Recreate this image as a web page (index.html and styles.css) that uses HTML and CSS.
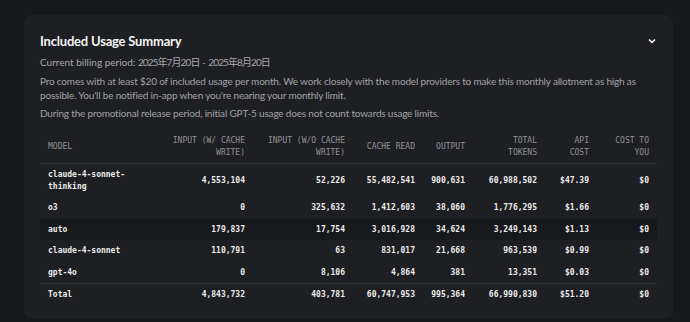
FILE: index.html
```html
<!DOCTYPE html>
<html lang="en">
<head>
  <meta charset="UTF-8" />
  <title>Included Usage Summary</title>
  <link rel="stylesheet" href="styles.css">
</head>
<body>
  <section class="card">
    <header class="card-head">
      <h1>Included Usage Summary</h1>
      <svg class="chevron" width="8" height="6" viewBox="0 0 8 6"><path d="M1 1.5 L4 4.5 L7 1.5" fill="none" stroke="#fff" stroke-width="1.5"/></svg>
    </header>
    <p class="period">Current billing period: <span class="date">2025年7月20日</span> - <span class="date">2025年8月20日</span></p>
    <p class="note">Pro comes with at least $20 of included usage per month. We work closely with the model providers to make this monthly allotment as high as possible. You'll be notified in-app when you're nearing your monthly limit.</p>
    <p class="note">During the promotional release period, initial GPT-5 usage does not count towards usage limits.</p>

    <table class="usage">
      <colgroup>
        <col class="w-model">
        <col class="w-in">
        <col class="w-in2">
        <col class="w-read">
        <col class="w-out">
        <col class="w-total">
        <col class="w-api">
        <col class="w-you">
      </colgroup>
      <thead>
        <tr>
          <th class="model">Model</th>
          <th>Input (w/ Cache Write)</th>
          <th>Input (w/o Cache Write)</th>
          <th>Cache Read</th>
          <th>Output</th>
          <th>Total Tokens</th>
          <th>API Cost</th>
          <th>Cost to You</th>
        </tr>
      </thead>
      <tbody>
        <tr>
          <td class="model">claude-4-sonnet-thinking</td>
          <td>4,553,104</td><td>52,226</td><td>55,482,541</td><td>900,631</td><td>60,988,502</td><td>$47.39</td><td>$0</td>
        </tr>
        <tr>
          <td class="model">o3</td>
          <td>0</td><td>325,632</td><td>1,412,603</td><td>38,060</td><td>1,776,295</td><td>$1.66</td><td>$0</td>
        </tr>
        <tr class="hover">
          <td class="model">auto</td>
          <td>179,837</td><td>17,754</td><td>3,016,928</td><td>34,624</td><td>3,249,143</td><td>$1.13</td><td>$0</td>
        </tr>
        <tr>
          <td class="model">claude-4-sonnet</td>
          <td>110,791</td><td>63</td><td>831,017</td><td>21,668</td><td>963,539</td><td>$0.99</td><td>$0</td>
        </tr>
        <tr>
          <td class="model">gpt-4o</td>
          <td>0</td><td>8,106</td><td>4,864</td><td>381</td><td>13,351</td><td>$0.03</td><td>$0</td>
        </tr>
      </tbody>
      <tfoot>
        <tr>
          <td class="model">Total</td>
          <td>4,843,732</td><td>403,781</td><td>60,747,953</td><td>995,364</td><td>66,990,830</td><td>$51.20</td><td>$0</td>
        </tr>
      </tfoot>
    </table>
  </section>
</body>
</html>
```

FILE: styles.css
```css
body {
    margin: 0;
    padding: 15px 17px 4px 24px;
    background-color: #17181b;
    color: #e6e6e6;
    font-family: 'Lato', 'Noto Sans CJK JP', sans-serif;
    height: 322px;
    box-sizing: border-box;
    overflow: hidden;
}
.card {
    background: #1e1f23;
    border-radius: 8px;
    padding: 16px 16px 13px 16px;
}
.card-head {
    display: flex;
    justify-content: space-between;
    align-items: center;
    padding-right: 1px;
}
h1 {
    margin: 0;
    font-size: 13px;
    font-weight: 700;
    letter-spacing: -0.2px;
    color: #f4f4f4;
    line-height: 20px;
}
.chevron {
    display: block;
}
.period {
    margin: 4px 0 0;
    font-size: 10px;
    line-height: 15px;
    color: #a7a7aa;
}
.period .date {
    letter-spacing: -0.9px;
}
.note {
    margin: 4px 0 0;
    font-size: 10px;
    line-height: 14px;
    letter-spacing: -0.18px;
    color: #a2a2a6;
}
.usage {
    width: 100%;
    margin-top: 10px;
    border-collapse: collapse;
    table-layout: fixed;
    font-family: 'DejaVu Sans Mono', monospace;
    font-size: 8px;
    line-height: 11.5px;
}
.w-model { width: 120px; }
.w-in { width: 93px; }
.w-in2 { width: 100px; }
.w-read { width: 70px; }
.w-out { width: 50px; }
.w-total { width: 72px; }
.w-api { width: 52px; }
.w-you { width: 60px; }
.usage th,
.usage td {
    padding: 5px 8px;
    text-align: right;
    vertical-align: middle;
}
.usage th {
    font-weight: normal;
    text-transform: uppercase;
    color: #929297;
    border-bottom: 1px solid #2e2f34;
}
.usage td {
    font-weight: bold;
    color: #ececec;
}
.usage .model {
    text-align: left;
}
.usage tr.hover td {
    background: #18191c;
}
.usage tfoot td {
    border-top: 1px solid #2e2f34;
}
```
